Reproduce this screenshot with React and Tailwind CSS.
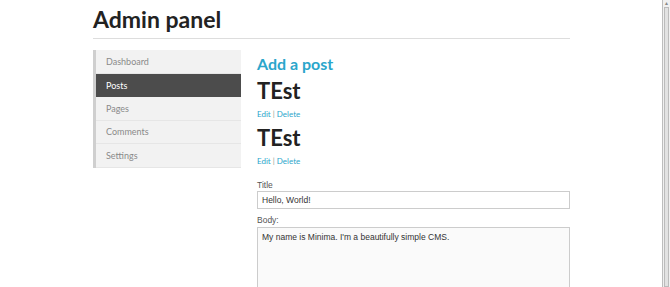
import React from 'react';

const navItems = ['Dashboard', 'Posts', 'Pages', 'Comments', 'Settings'];

const posts = [{ id: 1, title: 'TEst' }, { id: 2, title: 'TEst' }];

const Sidebar = ({ active }) => (
  <ul className="self-start w-[148px] border-l-[3px] border-[#cfcfcf] bg-[#f2f2f2]">
    {navItems.map((item) => (
      <li
        key={item}
        className={
          item === active
            ? 'h-[23.6px] pl-[10px] flex items-center text-[9px] text-white bg-[#4c4c4c]'
            : 'h-[23.6px] pl-[10px] flex items-center text-[9px] text-[#8a8a8a] border-b border-[#e6e6e6]'
        }
      >
        {item}
      </li>
    ))}
  </ul>
);

const App = () => {
  return (
    <div className="relative w-[670px] h-[287px] overflow-hidden bg-white font-['Lato',sans-serif]">
      <div className="w-[477px] ml-[93px]">
        <h1 className="pt-[5px] h-[38px] text-[23px] font-bold text-[#222] leading-[28px]">Admin panel</h1>
        <div className="border-t border-[#dddddd]" />
        <div className="flex mt-[11px] gap-[16px]">
          <Sidebar active="Posts" />
          <div className="flex-1">
            <h2 className="mt-[4px] text-[16px] font-bold text-[#2ba6cb] leading-[20px]">Add a post</h2>
            {posts.map((post) => (
              <div key={post.id} className="pt-[4px] [&+&]:pt-[6px]">
                <h3 className="text-[22px] font-bold text-[#222] leading-[26px]">{post.title}</h3>
                <p className="mt-[5px] text-[8px] text-[#999] leading-[10px]">
                  <a className="text-[#2ba6cb]">Edit</a> | <a className="text-[#2ba6cb]">Delete</a>
                </p>
              </div>
            ))}
            <form className="mt-[15px] font-['Liberation_Sans',sans-serif]">
              <label className="block text-[8.5px] text-[#555] leading-[9px]">Title</label>
              <input
                className="block mt-[1px] w-full h-[18px] border border-[#ccc] px-[4px] text-[8.5px] text-[#333] bg-white outline-none"
                defaultValue="Hello, World!"
              />
              <label className="block mt-[7px] text-[8.5px] text-[#555] leading-[9px]">Body:</label>
              <textarea
                className="block mt-[2px] w-full h-[80px] border border-[#ccc] px-[4px] py-[3px] text-[8.5px] text-[#333] bg-[#fafafa] resize-none outline-none"
                defaultValue="My name is Minima. I'm a beautifully simple CMS."
              />
            </form>
          </div>
        </div>
      </div>
      <div className="absolute top-0 right-0 w-[8px] h-full bg-[#f0f0f0] border-l border-[#bdbdbd]">
        <div className="h-[7px] flex items-center justify-center text-[5px] text-[#888]">▲</div>
        <div className="mx-[1px] h-[280px] bg-[#e2e2e2] border border-[#bbb]" />
      </div>
    </div>
  );
};

export default App;
